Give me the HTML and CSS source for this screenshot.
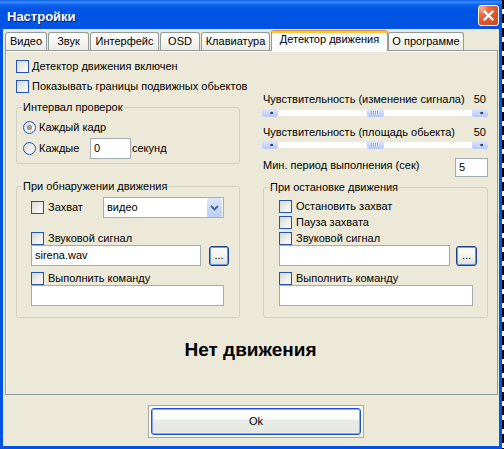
FILE: index.html
```html
<!DOCTYPE html>
<html lang="ru">
<head>
<meta charset="utf-8">
<title>Настройки</title>
<link rel="stylesheet" href="styles.css">
</head>
<body>
<div class="screen">
  <div class="window">
    <div class="titlebar">
      <span class="title">Настройки</span>
      <span class="close"><svg width="19" height="19" viewBox="0 0 19 19"><path d="M5.5 5.5 L13.5 13.5 M13.5 5.5 L5.5 13.5" stroke="#fff" stroke-width="2.4" stroke-linecap="round" fill="none"/></svg></span>
    </div>
    <div class="client">
      <div class="tabs">
        <span class="tab tw-video">Видео</span>
        <span class="tab tw-sound">Звук</span>
        <span class="tab tw-iface">Интерфейс</span>
        <span class="tab tw-osd">OSD</span>
        <span class="tab tw-keys">Клавиатура</span>
        <span class="tab active tw-motion">Детектор движения</span>
        <span class="tab tw-about">О программе</span>
      </div>
      <div class="panel">
        <div class="top">
          <div class="col-left">
            <div class="cb-row"><span class="cb"></span>Детектор движения включен</div>
            <div class="cb-row"><span class="cb"></span>Показывать границы подвижных обьектов</div>
            <fieldset class="group g-interval">
              <legend>Интервал проверок</legend>
              <div class="gbody">
                <div class="radio-row"><span class="radio checked"></span>Каждый кадр</div>
                <div class="radio-row r2"><span class="radio"></span><span class="lbl-each">Каждые</span><span class="input in-sec">0</span>секунд</div>
              </div>
            </fieldset>
          </div>
          <div class="col-right">
            <div class="sl-label"><span>Чувствительность (изменение сигнала)</span><span>50</span></div>
            <div class="slider"><span class="sl-btn"></span><span class="sl-space"></span><span class="thumb"></span><span class="sl-space"></span><span class="sl-btn"></span></div>
            <div class="sl-label"><span>Чувствительность (площадь обьекта)</span><span>50</span></div>
            <div class="slider s2"><span class="sl-btn"></span><span class="sl-space"></span><span class="thumb"></span><span class="sl-space"></span><span class="sl-btn"></span></div>
            <div class="period"><span class="period-lbl">Мин. период выполнения (сек)</span><span class="input in-period">5</span></div>
          </div>
        </div>
        <div class="bottom">
          <fieldset class="group g-detect">
            <legend>При обнаружении движения</legend>
            <div class="gbody">
              <div class="grow row-capture"><span class="cb"></span><span class="lbl-capture">Захват</span>
                <span class="select"><span>видео</span><span class="dd-btn"><svg width="9" height="6" viewBox="0 0 9 6"><path d="M1 1 L4.5 4.5 L8 1" stroke="#4D6185" stroke-width="1.8" fill="none"/></svg></span></span>
              </div>
              <div class="cb-row mt14"><span class="cb"></span>Звуковой сигнал</div>
              <div class="file-row"><span class="input in-file">sirena.wav</span><span class="dots d-left">...</span></div>
              <div class="cb-row mt6"><span class="cb"></span>Выполнить команду</div>
              <div class="file-row"><span class="input in-cmd"></span></div>
            </div>
          </fieldset>
          <fieldset class="group g-stop">
            <legend>При остановке движения</legend>
            <div class="gbody">
              <div class="cb-row"><span class="cb"></span>Остановить захват</div>
              <div class="cb-row mt3"><span class="cb"></span>Пауза захвата</div>
              <div class="cb-row mt3"><span class="cb"></span>Звуковой сигнал</div>
              <div class="file-row"><span class="input in-file2"></span><span class="dots d-right">...</span></div>
              <div class="cb-row mt6"><span class="cb"></span>Выполнить команду</div>
              <div class="file-row"><span class="input in-cmd2"></span></div>
            </div>
          </fieldset>
        </div>
        <div class="status">Нет движения</div>
      </div>
      <div class="buttons">
        <div class="ok-frame"><div class="ok">Ok</div></div>
      </div>
    </div>
  </div>
  <div class="edge"></div>
</div>
</body>
</html>
```
FILE: styles.css
```css
* { box-sizing: border-box; }
html, body { margin: 0; padding: 0; }
body {
  width: 504px;
  height: 449px;
  overflow: hidden;
  background: #fff;
  font-family: "Liberation Sans", Arial, sans-serif;
  font-size: 11px;
  line-height: 13px;
  color: #000;
}
.screen { display: flex; height: 449px; }
.window {
  width: 502px;
  height: 449px;
  flex: none;
  display: flex;
  flex-direction: column;
  background: #0054E3;
}
.titlebar {
  height: 29px;
  flex: none;
  display: flex;
  justify-content: space-between;
  align-items: flex-start;
  background: linear-gradient(#0A5DEB 0, #3D8DF7 2px, #0A62EC 5px, #0054E3 10px, #0054E3 100%);
}
.title {
  padding: 9px 0 0 7px;
  font-weight: bold;
  font-size: 13px;
  line-height: 16px;
  color: #fff;
  text-shadow: 1px 1px #0A1E6E;
}
.close {
  width: 21px;
  height: 21px;
  margin: 5px 3px 0 0;
  border: 1px solid #fff;
  border-radius: 3px;
  background: radial-gradient(circle at 15% 12%, #F7B08A 0, #E56A42 30%, #D9552C 65%, #C94822 100%);
  display: flex;
  align-items: center;
  justify-content: center;
}
.client {
  flex: 1;
  margin: 0 3px 3px;
  background: #ECE9D8;
  padding: 1px 1px 0 2px;
  display: flex;
  flex-direction: column;
}

/* tabs */
.tabs {
  height: 20px;
  flex: none;
  display: flex;
  align-items: flex-end;
  position: relative;
  z-index: 1;
}
.tab {
  height: 18px;
  margin-right: 1px;
  border: 1px solid #919B9C;
  border-bottom: none;
  border-radius: 3px 3px 0 0;
  background: linear-gradient(#FFFFFF, #F4F3EE 60%, #ECEBE5);
  text-align: center;
  padding-top: 2px;
  white-space: nowrap;
  flex: none;
}
.tab.active {
  height: 21px;
  margin-bottom: -1px;
  margin-right: 0;
  background: #FCFCFE;
  border-top: 1px solid #E68B2C;
  box-shadow: inset 0 2px #FFC83C;
  padding-top: 2px;
}
.tw-video { width: 42px; }
.tw-sound { width: 41px; }
.tw-iface { width: 69px; }
.tw-osd { width: 40px; }
.tw-keys { width: 69px; }
.tw-motion { width: 117px; }
.tw-about { width: 76px; }

/* panel */
.panel {
  height: 345px;
  flex: none;
  border: 1px solid #919B9C;
  background: #ECE9D8;
  box-shadow: inset 1px 1px #FAFAF6;
  padding: 9px 9px 0 10px;
}
.top { display: flex; align-items: flex-start; }
.col-left { width: 224px; flex: none; }
.col-right { width: 226px; flex: none; margin-left: 22px; margin-top: 33px; }

.cb-row { display: flex; align-items: center; height: 13px; white-space: nowrap; }
.col-left .cb-row + .cb-row { margin-top: 7px; }
.cb {
  width: 13px;
  height: 13px;
  flex: none;
  border: 1px solid #2552B5;
  background: linear-gradient(135deg, #D8D8D2, #FFFFFF);
  margin-right: 3px;
}
.gbody .cb { margin-right: 4px; }
.mt3 { margin-top: 3px; }
.mt6 { margin-top: 6px; }
.mt14 { margin-top: 14px; }

.group {
  margin: 0;
  padding: 0;
  border: 1px solid #D0D0BF;
  border-radius: 3px;
  min-width: 0;
}
.group legend {
  margin-left: 5px;
  padding: 0 1px;
  line-height: 13px;
}
.g-interval { margin-top: 8px; }
.g-interval .gbody { padding: 6px 0 4px 6px; }

.radio-row { display: flex; align-items: center; height: 14px; white-space: nowrap; }
.radio-row.r2 { height: 21px; margin-top: 4px; }
.radio {
  width: 13px;
  height: 13px;
  flex: none;
  border-radius: 50%;
  border: 1px solid #2552B5;
  background: linear-gradient(135deg, #D8D8D2, #FFFFFF);
  margin-right: 3px;
}
.radio.checked {
  background: radial-gradient(circle, #9C9C98 0 2.4px, transparent 3px), linear-gradient(135deg, #D8D8D2, #FFFFFF);
}
.lbl-each { width: 51px; flex: none; }

.input {
  display: flex;
  align-items: center;
  height: 21px;
  flex: none;
  border: 1px solid #A5ACB5;
  background: #fff;
  padding-left: 3px;
  white-space: nowrap;
}
.in-sec { width: 41px; margin-right: 1px; }

/* right column */
.sl-label {
  display: flex;
  justify-content: space-between;
  padding: 0 2px 0 1px;
  white-space: nowrap;
}
.slider {
  height: 8px;
  margin: 3px 0 9px;
  display: flex;
  background: #FEFEFD;
  box-shadow: inset 0 1px #ECEBE3, inset 0 -1px #ECEBE3;
}
.slider.s2 { margin-top: 2px; }
.sl-btn {
  width: 16px;
  height: 8px;
  flex: none;
  border-radius: 2px;
  background: radial-gradient(circle at 60% 50%, #2D3E6A 0 1px, transparent 1.6px), linear-gradient(#DCE6FE, #B4C7F6);
}
.sl-space { flex: 1; }
.thumb {
  width: 17px;
  height: 8px;
  flex: none;
  border-radius: 2px;
  background: repeating-linear-gradient(90deg, #8DA8EA 0 1px, #E2EAFD 1px 2px) center / 8px 4px no-repeat, linear-gradient(#DCE6FE, #B4C7F6);
}
.period {
  display: flex;
  justify-content: space-between;
  align-items: flex-start;
  padding-left: 1px;
  white-space: nowrap;
}
.period-lbl { margin-top: 1px; }
.in-period { width: 33px; height: 19px; }

/* bottom groups */
.bottom { display: flex; align-items: flex-start; margin-top: 3px; }
.g-detect { width: 224px; flex: none; }
.g-stop { width: 225px; flex: none; margin-left: 23px; margin-top: 1px; }
.g-detect .gbody { padding: 4px 0 11px 14px; }
.g-stop .gbody { padding: 6px 0 11px 15px; }
.grow { display: flex; align-items: center; white-space: nowrap; }
.row-capture { height: 21px; }
.lbl-capture { width: 55px; flex: none; }
.select {
  width: 121px;
  height: 21px;
  flex: none;
  border: 1px solid #A5ACB5;
  background: #fff;
  display: flex;
  align-items: center;
  justify-content: space-between;
  padding: 0 1px 0 3px;
}
.dd-btn {
  width: 15px;
  height: 19px;
  border-radius: 2px;
  background: linear-gradient(#DCE6FE, #B9CDF9);
  display: flex;
  align-items: center;
  justify-content: center;
}
.file-row { display: flex; align-items: center; height: 21px; }
.in-file { width: 170px; }
.in-file2 { width: 171px; }
.in-cmd { width: 193px; }
.in-cmd2 { width: 194px; }
.dots {
  height: 20px;
  flex: none;
  display: flex;
  align-items: flex-end;
  justify-content: center;
  padding-bottom: 3px;
  border: 1px solid #1F3F8C;
  border-radius: 3px;
  background: linear-gradient(#FFFFFF, #F3F3EE 55%, #DEDDD4);
  box-shadow: inset 0 0 0 1px #6E9AEA;
}
.d-left { width: 20px; margin-left: 8px; }
.d-right { width: 21px; margin-left: 6px; }

.status {
  margin-top: 21px;
  padding-right: 3px;
  text-align: center;
  font-weight: bold;
  font-size: 19px;
  line-height: 22px;
}

/* buttons */
.buttons { margin-top: 10px; padding-left: 143px; }
.ok-frame {
  width: 216px;
  height: 33px;
  border: 1px solid #A9A79C;
  padding: 2px;
  background: #FAFAF7;
}
.ok {
  height: 27px;
  border: 1px solid #1E4FD8;
  border-radius: 3px;
  box-shadow: inset 0 0 0 1px #88A9EE;
  background: linear-gradient(#FEFEFE 0, #FAFAF8 40%, #E9ECE6 45%, #E6E9E2 90%, #F2F3EF 100%);
  display: flex;
  align-items: center;
  justify-content: center;
}

.edge {
  width: 2px;
  flex: none;
  background: repeating-linear-gradient(#000 0 9px, #fff 9px 14px);
}
```
